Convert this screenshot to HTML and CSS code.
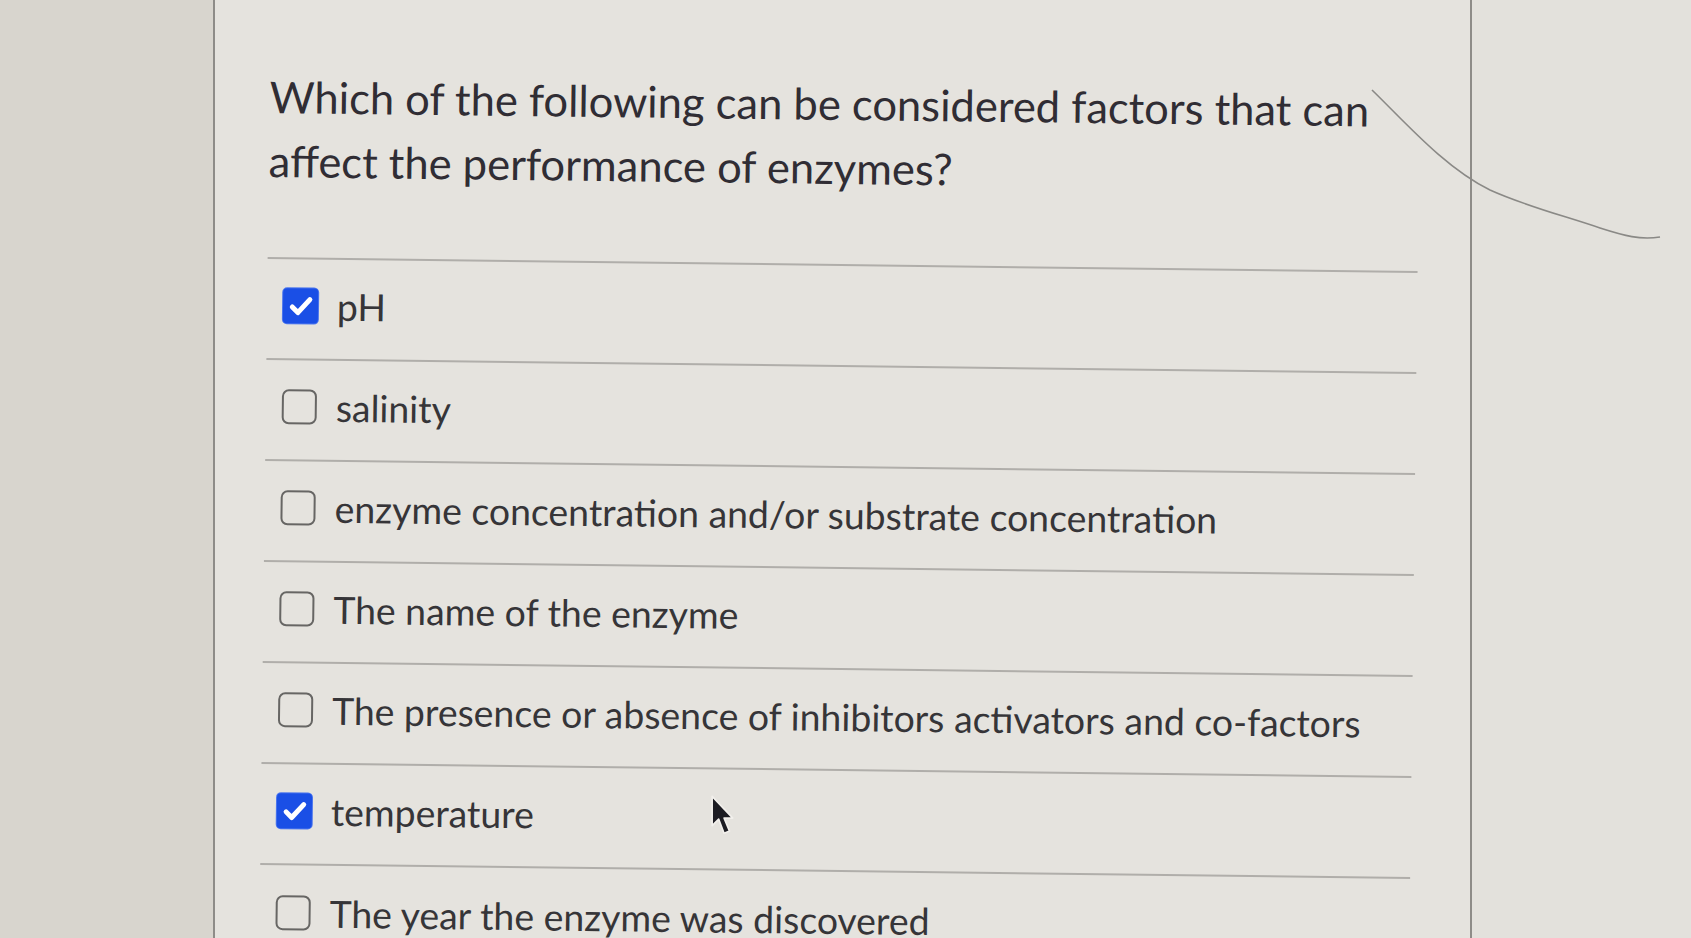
FILE: index.html
```html
<!DOCTYPE html>
<html lang="en">
<head>
<meta charset="utf-8">
<title>Quiz question</title>
<link rel="stylesheet" href="styles.css">
</head>
<body>
<div class="screen">
  <div class="gutter"></div>
  <main class="panel">
    <div class="content">
      <h1 class="question">Which of the following can be considered factors that can affect the performance of enzymes?</h1>
      <ul class="options">
        <li class="option"><span class="box checked"><svg viewBox="0 0 24 24" class="tick"><path d="M5 12.5l4.5 4.5L19 6.5" /></svg></span><span class="label">pH</span></li>
        <li class="option"><span class="box"></span><span class="label">salinity</span></li>
        <li class="option"><span class="box"></span><span class="label">enzyme concentration and/or substrate concentration</span></li>
        <li class="option"><span class="box"></span><span class="label">The name of the enzyme</span></li>
        <li class="option"><span class="box"></span><span class="label">The presence or absence of inhibitors activators and co-factors</span></li>
        <li class="option"><span class="box checked"><svg viewBox="0 0 24 24" class="tick"><path d="M5 12.5l4.5 4.5L19 6.5" /></svg></span><span class="label">temperature</span></li>
        <li class="option"><span class="box"></span><span class="label">The year the enzyme was discovered</span></li>
      </ul>
    </div>
  </main>
  <div class="aside"></div>
</div>
<svg class="cursor" viewBox="0 0 24 40" width="26" height="44">
  <path d="M2 1 L2 28 L8 22 L13 35 L18 33 L13 21 L21 21 Z" fill="#1c1c22" stroke="#f2f0ec" stroke-width="1.5" stroke-linejoin="round"/>
</svg>
<svg class="hair" viewBox="0 0 1691 938" width="1691" height="938">
  <path d="M1372 90 C1405 122 1445 168 1490 190 C1525 206 1565 216 1600 228 C1625 236 1640 240 1660 237" fill="none" stroke="#8a8986" stroke-width="1.6"/>
</svg>
</body>
</html>
```

FILE: styles.css
```css
* { box-sizing: border-box; }
html, body {
  margin: 0;
  padding: 0;
  width: 1691px;
  height: 938px;
  overflow: hidden;
}
body {
  background: #d9d6cf;
  font-family: Lato, "Noto Sans", sans-serif;
  position: relative;
}
.screen {
  display: flex;
  height: 938px;
}
.gutter {
  width: 213px;
  flex: none;
  background: #d8d5ce;
}
.panel {
  width: 1259px;
  flex: none;
  background: #e5e3de;
  border-left: 2px solid #8e8c88;
  border-right: 2px solid #8e8c88;
  padding-left: 55px;
  overflow: hidden;
}
.content {
  width: 1150px;
  transform: rotate(0.7deg);
  transform-origin: 0 0;
}
.aside {
  flex: 1;
  background: #e3e1dc;
}
.question {
  margin: 64px 0 0;
  font-size: 43.5px;
  line-height: 64px;
  font-weight: 400;
  color: #302d34;
  padding-bottom: 65px;
  border-bottom: 2px solid #b0aeaa;
}
.options {
  list-style: none;
  margin: 0;
  padding: 0;
}
.option {
  display: flex;
  align-items: center;
  height: 101px;
  border-bottom: 2px solid #b0aeaa;
  padding-left: 16px;
  padding-bottom: 6px;
}
.option:last-child { border-bottom: none; }
.box {
  width: 35px;
  height: 35px;
  flex: none;
  border: 2.5px solid #676664;
  border-radius: 7px;
  margin-right: 19px;
  display: flex;
  align-items: center;
  justify-content: center;
}
.box.checked {
  background: #1a4fe6;
  border: none;
  border-radius: 4px;
  box-shadow: 0 0 0 1px #4d77ee;
}
.tick {
  width: 30px;
  height: 30px;
}
.tick path {
  fill: none;
  stroke: #ffffff;
  stroke-width: 4;
  stroke-linecap: round;
  stroke-linejoin: round;
}
.label {
  font-size: 37.4px;
  color: #363538;
  line-height: 1;
}
.cursor {
  position: absolute;
  left: 710px;
  top: 795px;
}
.hair {
  position: absolute;
  left: 0;
  top: 0;
  pointer-events: none;
}
```
